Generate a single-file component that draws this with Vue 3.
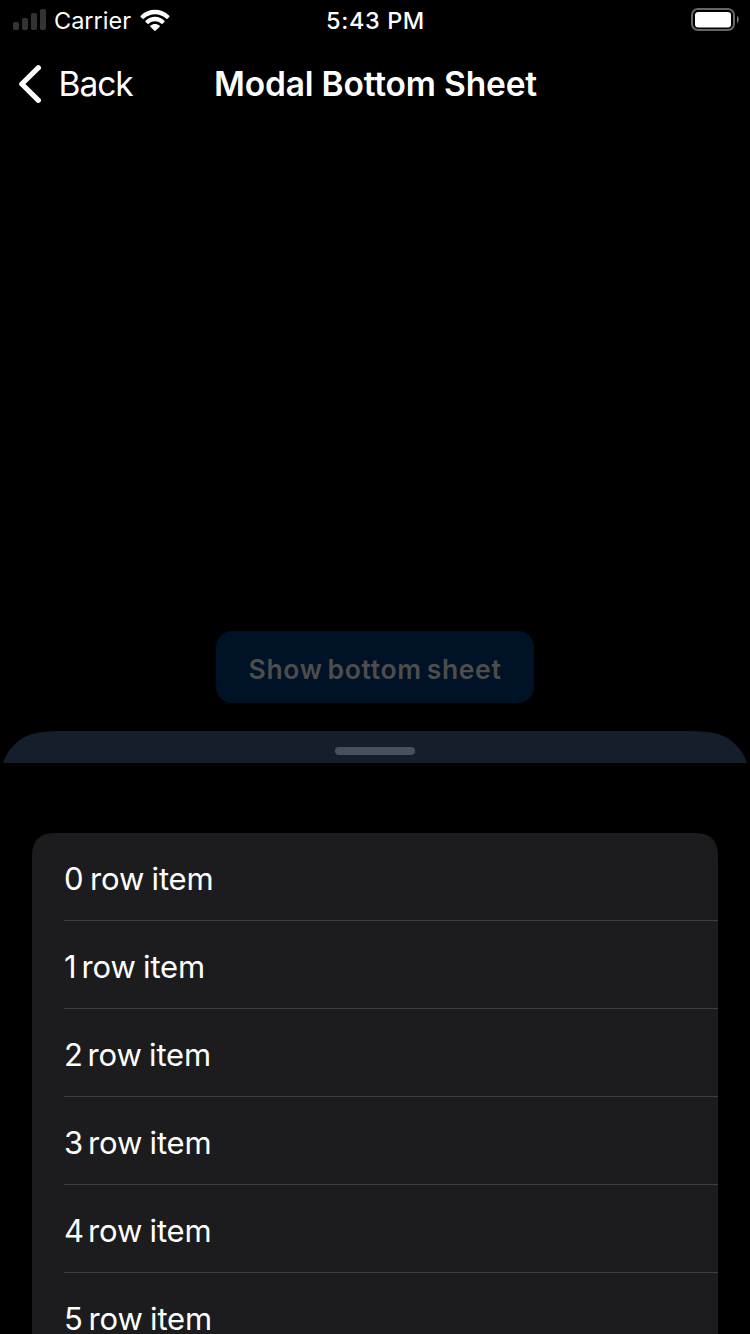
<script setup>
const rows = [
  { n: 0, width: 26 },
  { n: 1, width: 17.5 },
  { n: 2, width: 23.5 },
  { n: 3, width: 24 },
  { n: 4, width: 24 },
  { n: 5, width: 24.5 }
]

// Continuous-curvature top corners, as used by iOS surfaces
function smoothTop(w, h, r) {
  const a = 1.52866 * r
  const b = 1.08849 * r
  const c = 0.86841 * r
  const d = 0.63149 * r
  const e = 0.07491 * r
  const f = 0.37282 * r
  const g = 0.16906 * r
  return `path("M0 ${h}V${a}C0 ${b} 0 ${c} ${e} ${d}C${g} ${f} ${f} ${g} ${d} ${e}C${c} 0 ${b} 0 ${a} 0H${w - a}C${w - b} 0 ${w - c} 0 ${w - d} ${e}C${w - f} ${g} ${w - g} ${f} ${w - e} ${d}C${w} ${c} ${w} ${b} ${w} ${a}V${h}Z")`
}
const sheetShape = { clipPath: smoothTop(750, 603, 48) }
const listShape = { clipPath: smoothTop(686, 501, 20) }
</script>

<template>
  <div class="screen">
    <header class="status">
      <div class="status-left">
        <svg class="signal" width="34" height="22" viewBox="0 0 34 22" fill="#333">
          <rect x="0" y="13" width="6" height="8" rx="1.8" />
          <rect x="9" y="9" width="6" height="12" rx="1.8" />
          <rect x="18" y="4" width="6" height="17" rx="1.8" />
          <rect x="27" y="0" width="6" height="21" rx="1.8" />
        </svg>
        <span class="carrier">Carrier</span>
        <svg class="wifi" width="30" height="22" viewBox="0 0 30 22" fill="#fff">
          <path d="M0.7 6.7C8.7-1.2 21.3-1.2 29.3 6.7Q29.9 7.3 29.3 7.9L27.4 9.8Q26.9 10.2 26.3 9.7C19.9 3.6 10.1 3.6 3.7 9.7Q3.1 10.2 2.6 9.8L.7 7.9Q.1 7.3.7 6.7Z" />
          <path d="M5.6 11.7C10.9 6.5 19.1 6.5 24.4 11.7Q25 12.3 24.4 12.9L22.5 14.8Q22 15.3 21.4 14.8C17.8 11.5 12.2 11.5 8.6 14.8Q8 15.3 7.5 14.8L5.6 12.9Q5 12.3 5.6 11.7Z" />
          <path d="M10.5 16.6C13.1 14.5 16.9 14.5 19.5 16.6Q20.2 17.2 19.5 17.9L15.7 21.6Q15 22.3 14.3 21.6L10.5 17.9Q9.8 17.2 10.5 16.6Z" />
        </svg>
      </div>
      <span class="time">5:43 PM</span>
      <svg class="battery" width="49" height="24" viewBox="0 0 49 24">
        <rect x="1" y="1" width="42" height="21" rx="6" fill="none" stroke="#666" stroke-width="2" />
        <rect x="4" y="4" width="36" height="15.5" rx="3.3" fill="#fff" />
        <path d="M46 8C48.3 9.2 48.3 13.8 46 15Z" fill="#777" />
      </svg>
    </header>

    <nav class="nav">
      <div class="back">
        <svg width="24" height="40" viewBox="0 0 24 40" fill="none" stroke="#fff" stroke-width="5.2" stroke-linecap="round" stroke-linejoin="round">
          <path d="M20.4 3.7L3.8 20L20.4 36.3" />
        </svg>
        <span class="back-label">Back</span>
      </div>
      <h1 class="title">Modal Bottom Sheet</h1>
    </nav>

    <main class="content">
      <button class="show">Show bottom sheet</button>
    </main>

    <section class="sheet" :style="sheetShape">
      <div class="grip-bar"><div class="grip"></div></div>
      <ul class="list" :style="listShape">
        <li v-for="row in rows" :key="row.n" class="row">
          <span class="digit" :style="{ width: row.width + 'px' }">{{ row.n }}</span>
          <span class="label">row item</span>
        </li>
      </ul>
    </section>
  </div>
</template>

<style>
html, body { background: #000; }
</style>

<style scoped>
.screen {
  width: 750px;
  height: 1334px;
  overflow: hidden;
  display: flex;
  flex-direction: column;
  background: #000;
  color: #fff;
  font-family: Inter, "Liberation Sans", sans-serif;
}
.status {
  height: 40px;
  flex: none;
  display: grid;
  grid-template-columns: 1fr auto 1fr;
  align-items: center;
  padding: 0 10px 0 13px;
  box-sizing: border-box;
}
.status-left { display: flex; align-items: center; }
.signal { margin-top: -1px; }
.carrier {
  margin-left: 7px;
  width: 79px;
  padding-top: 2px;
  font-size: 23.5px;
  line-height: 38px;
  letter-spacing: 0;
  white-space: nowrap;
}
.wifi { margin-left: 7px; }
.time {
  padding: 2px 2px 0 0;
  font-size: 23.5px;
  font-weight: 500;
  line-height: 38px;
  letter-spacing: 0.6px;
}
.battery { justify-self: end; }
.nav {
  height: 88px;
  flex: none;
  display: grid;
  grid-template-columns: 214px 1fr;
  align-items: center;
}
.back { display: flex; align-items: center; padding-left: 18px; }
.back-label {
  margin-left: 16.5px;
  padding-top: 1px;
  font-size: 33.5px;
  line-height: 41px;
  letter-spacing: -1px;
}
.title {
  margin: 0;
  padding-top: 1px;
  font-size: 33.5px;
  line-height: 41px;
  font-weight: 600;
  letter-spacing: -0.18px;
  white-space: nowrap;
}
.content {
  height: 603px;
  flex: none;
  display: flex;
  align-items: flex-end;
  justify-content: center;
  padding-bottom: 28px;
  box-sizing: border-box;
}
.show {
  width: 318px;
  height: 72px;
  border: 0;
  border-radius: 16px;
  padding: 3px 0 0;
  background: #001225;
  color: #4d4d4d;
  font: 600 26.5px Inter, sans-serif;
  letter-spacing: 0.65px;
  word-spacing: -2.4px;
  white-space: nowrap;
}
.sheet {
  height: 603px;
  flex: none;
  display: flex;
  flex-direction: column;
}
.grip-bar {
  height: 32px;
  flex: none;
  display: flex;
  justify-content: center;
  align-items: flex-start;
  background: #151e2b;
}
.grip {
  width: 80px;
  height: 8px;
  margin-top: 16px;
  border-radius: 4px;
  background: #47515e;
}
.list {
  list-style: none;
  width: 686px;
  height: 501px;
  margin: 70px 0 0 32px;
  padding: 0 0 0 32px;
  box-sizing: border-box;
  background: #1c1c1e;
  overflow: hidden;
}
.row {
  height: 88px;
  box-sizing: border-box;
  display: flex;
  align-items: center;
  padding-top: 4px;
  border-bottom: 1px solid #3d3d41;
  font-size: 31px;
  line-height: 34px;
  white-space: nowrap;
}
.digit { flex: none; }
.label { letter-spacing: -0.1px; word-spacing: -1.4px; }
</style>
